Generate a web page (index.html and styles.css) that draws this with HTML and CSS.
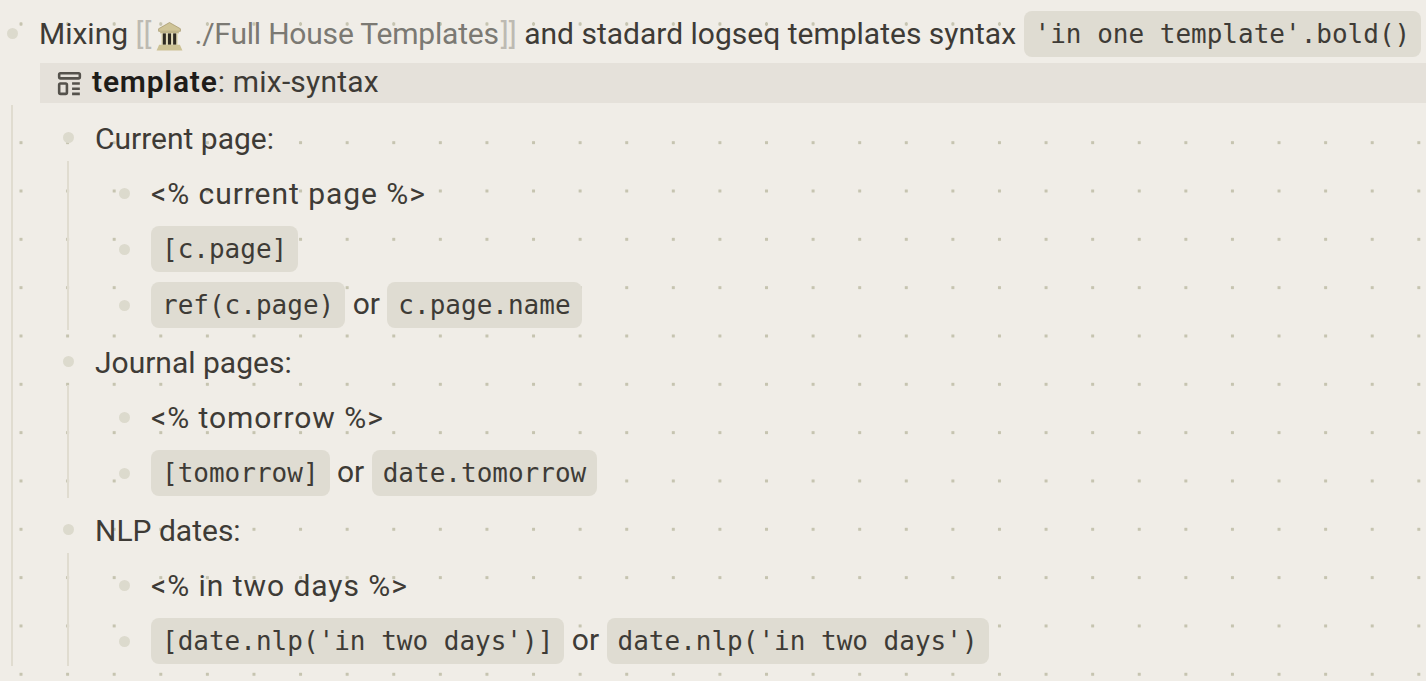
FILE: index.html
```html
<!DOCTYPE html>
<html lang="en">
<head>
    <meta charset="UTF-8">
    <title>Mix syntax template</title>
    <link rel="stylesheet" href="styles.css">
</head>
<body>
    <div class="title-row">
        <span class="bullet"></span>
        <div class="content">
            <span>Mixing</span>
            <span class="brackets">[[</span><svg class="emoji" viewBox="0 0 26 28">
                <path d="M13 0.5 L23.5 6.5 V9 H2.5 V6.5 Z" fill="#cfc497" stroke="#a3966a" stroke-width="0.7"/>
                <rect x="4" y="9" width="18" height="2" fill="#bfb487"/>
                <rect x="5" y="11" width="16" height="11" fill="#e2dab8"/>
                <rect x="6.5" y="11" width="3" height="11" fill="#2e2a22"/>
                <rect x="11.5" y="11" width="3" height="11" fill="#2e2a22"/>
                <rect x="16.5" y="11" width="3" height="11" fill="#2e2a22"/>
                <path d="M3 22 H23 L25.5 27.5 H0.5 Z" fill="#cdc295"/>
            </svg><span class="page-ref">./Full House Templates</span><span class="brackets closing">]]</span>
            <span>and stadard logseq templates syntax</span>
            <code class="chip">'in one template'.bold()</code>
        </div>
    </div>

    <div class="prop-band">
        <svg class="prop-icon" viewBox="0 0 24 24">
            <rect x="4" y="4" width="16" height="4" rx="1"/>
            <rect x="4" y="12" width="6" height="8" rx="1"/>
            <path d="M14 12h6M14 16h6M14 20h6"/>
        </svg>
        <span class="prop-name">template</span><span class="prop-value">:&nbsp;mix-syntax</span>
    </div>

    <div class="outline">
        <div class="children">
            <div class="block">
                <span class="bullet"></span>
                <div class="content heading">Current page:</div>
            </div>
            <div class="children">
                <div class="block">
                    <span class="bullet"></span>
                    <div class="content tag">&lt;% current page %&gt;</div>
                </div>
                <div class="block">
                    <span class="bullet"></span>
                    <div class="content"><code class="chip">[c.page]</code></div>
                </div>
                <div class="block">
                    <span class="bullet"></span>
                    <div class="content"><code class="chip">ref(c.page)</code> or <code class="chip">c.page.name</code></div>
                </div>
            </div>
            <div class="block">
                <span class="bullet"></span>
                <div class="content heading">Journal pages:</div>
            </div>
            <div class="children">
                <div class="block">
                    <span class="bullet"></span>
                    <div class="content tag">&lt;% tomorrow %&gt;</div>
                </div>
                <div class="block">
                    <span class="bullet"></span>
                    <div class="content"><code class="chip">[tomorrow]</code> or <code class="chip">date.tomorrow</code></div>
                </div>
            </div>
            <div class="block">
                <span class="bullet"></span>
                <div class="content heading">NLP dates:</div>
            </div>
            <div class="children">
                <div class="block">
                    <span class="bullet"></span>
                    <div class="content tag">&lt;% in two days %&gt;</div>
                </div>
                <div class="block">
                    <span class="bullet"></span>
                    <div class="content"><code class="chip">[date.nlp('in two days')]</code> or <code class="chip">date.nlp('in two days')</code></div>
                </div>
            </div>
        </div>
    </div>
</body>
</html>
```

FILE: styles.css
```css
:root {
    --bg: #f0ede7;
    --band: #e5e1da;
    --chip: #dfdcd2;
    --text: #3e3b36;
    --bullet: #dcdacd;
    --guide: #e0dcd0;
    --dot: #c6c4b0;
}

* {
    margin: 0;
    padding: 0;
    box-sizing: border-box;
}

html, body {
    height: 681px;
    overflow: hidden;
}

body {
    background-color: var(--bg);
    color: var(--text);
    font-family: Roboto, sans-serif;
    font-size: 30px;
}

.title-row {
    display: flex;
    align-items: center;
    height: 63px;
    padding: 4px 0 0 7px;
    background: radial-gradient(circle, var(--dot) 1.5px, transparent 2px) -2.3px 22px / 46.6px 4px repeat-x;
}

.title-row .chip {
    vertical-align: 1px;
}

.outline {
    height: 578px;
    padding-top: 6px;
    background: radial-gradient(circle, var(--dot) 1.5px, transparent 2px) -2.3px 15.5px / 46.6px 48.33px;
}

.bullet {
    flex: none;
    width: 11px;
    height: 11px;
    margin-right: 21px;
    border-radius: 50%;
    background-color: var(--bullet);
}

.content {
    white-space: nowrap;
}

.heading {
    padding-top: 2px;
}

.tag {
    letter-spacing: 0.95px;
}

.brackets {
    color: #bdbab2;
}

.closing {
    margin-left: 2px;
}

.page-ref {
    color: #7b7973;
    letter-spacing: -0.2px;
}

.emoji {
    width: 27px;
    height: 29px;
    margin: 0 11px 0 5px;
    vertical-align: -7px;
}

.chip {
    display: inline-block;
    height: 46px;
    line-height: 46px;
    padding: 0 11px;
    border-radius: 8px;
    background-color: var(--chip);
    font-family: "DejaVu Sans Mono", monospace;
    font-size: 26px;
}

.prop-band {
    display: flex;
    align-items: center;
    height: 40px;
    margin-left: 40px;
    padding: 0 0 3px 14px;
    background-color: var(--band);
}

.prop-icon {
    width: 31px;
    height: 31px;
    margin: 3px 7px 0 0;
    fill: none;
    stroke: #55524c;
    stroke-width: 2;
}

.prop-name {
    font-weight: 600;
    color: #1e1c19;
    letter-spacing: 0.8px;
}

.prop-value {
    letter-spacing: 0.2px;
}

.children {
    position: relative;
    margin-left: 56px;
}

.outline > .children {
    margin-left: 0;
}

.children::before {
    content: "";
    position: absolute;
    top: -4px;
    bottom: 3px;
    left: 11px;
    width: 2px;
    background-color: var(--guide);
}

.block {
    display: flex;
    align-items: center;
    height: 56px;
    margin-left: 56px;
    padding-left: 7px;
}
```
